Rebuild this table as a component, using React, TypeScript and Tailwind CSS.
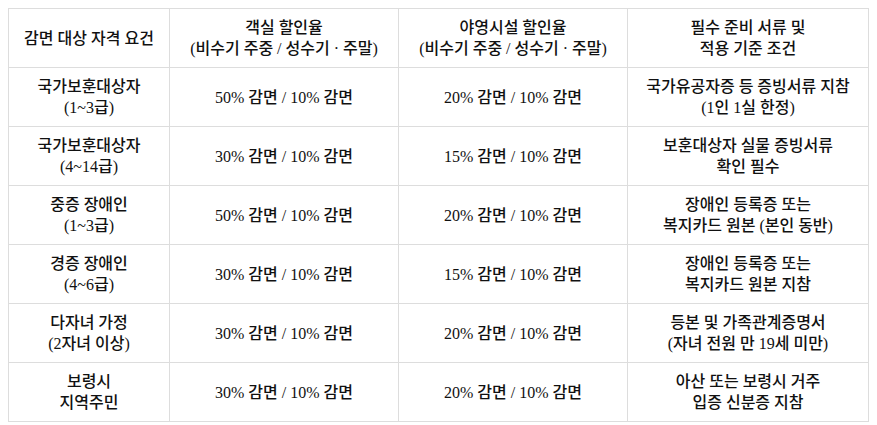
import React from "react";

const rows: [string[], string, string, string[]][] = [
  [["국가보훈대상자", "(1~3급)"], "50% 감면 / 10% 감면", "20% 감면 / 10% 감면", ["국가유공자증 등 증빙서류 지참", "(1인 1실 한정)"]],
  [["국가보훈대상자", "(4~14급)"], "30% 감면 / 10% 감면", "15% 감면 / 10% 감면", ["보훈대상자 실물 증빙서류", "확인 필수"]],
  [["중증 장애인", "(1~3급)"], "50% 감면 / 10% 감면", "20% 감면 / 10% 감면", ["장애인 등록증 또는", "복지카드 원본 (본인 동반)"]],
  [["경증 장애인", "(4~6급)"], "30% 감면 / 10% 감면", "15% 감면 / 10% 감면", ["장애인 등록증 또는", "복지카드 원본 지참"]],
  [["다자녀 가정", "(2자녀 이상)"], "30% 감면 / 10% 감면", "20% 감면 / 10% 감면", ["등본 및 가족관계증명서", "(자녀 전원 만 19세 미만)"]],
  [["보령시", "지역주민"], "30% 감면 / 10% 감면", "20% 감면 / 10% 감면", ["아산 또는 보령시 거주", "입증 신분증 지참"]],
];

function Lines({ l }: { l: string[] }) {
  return (
    <>
      {l.map((t, i) => (
        <div key={i}>{t}</div>
      ))}
    </>
  );
}

export default function App() {
  const cell = "border border-[#dddddd] h-[59px] px-2 text-center align-middle font-medium";
  return (
    <div
      className="bg-white p-2 text-[16px] leading-[21px] text-[#111]"
      style={{ fontFamily: '"Liberation Serif", "Noto Sans CJK KR", serif' }}
    >
      <table className="w-[860px] table-fixed border-collapse">
        <colgroup>
          <col className="w-[161px]" />
          <col className="w-[229px]" />
          <col className="w-[229px]" />
          <col className="w-[241px]" />
        </colgroup>
        <thead>
          <tr>
            <th className={cell}>감면 대상 자격 요건</th>
            <th className={cell}>
              <Lines l={["객실 할인율", "(비수기 주중 / 성수기 · 주말)"]} />
            </th>
            <th className={cell}>
              <Lines l={["야영시설 할인율", "(비수기 주중 / 성수기 · 주말)"]} />
            </th>
            <th className={cell}>
              <Lines l={["필수 준비 서류 및", "적용 기준 조건"]} />
            </th>
          </tr>
        </thead>
        <tbody>
          {rows.map((r, i) => (
            <tr key={i}>
              <td className={cell}>
                <Lines l={r[0]} />
              </td>
              <td className={cell}>{r[1]}</td>
              <td className={cell}>{r[2]}</td>
              <td className={cell}>
                <Lines l={r[3]} />
              </td>
            </tr>
          ))}
        </tbody>
      </table>
    </div>
  );
}
